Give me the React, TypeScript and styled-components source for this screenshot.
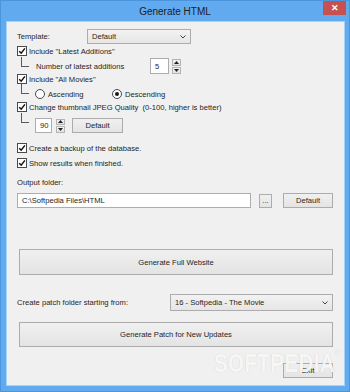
import React from "react";
import styled, { createGlobalStyle } from "styled-components";

const GlobalStyle = createGlobalStyle`
  html, body {
    margin: 0;
    padding: 0;
    background: #62aaef;
  }
  body {
    font-family: "Liberation Sans", Arial, sans-serif;
    color: #1e1e1e;
  }
`;

const Window = styled.div`
  width: 350px;
  height: 392px;
  box-sizing: border-box;
  background: #62aaef;
  border: 1px solid #4b95de;
  display: flex;
  flex-direction: column;
`;

const TitleBar = styled.div`
  height: 21px;
  display: grid;
  grid-template-columns: 1fr auto 1fr;
  align-items: start;
`;

const Title = styled.div`
  grid-column: 2;
  font-size: 10px;
  line-height: 21px;
  color: #202020;
`;

const CloseButton = styled.div`
  grid-column: 3;
  justify-self: end;
  width: 23px;
  height: 14px;
  margin-right: 3px;
  background: #c75050;
  color: #fff;
  font-size: 9px;
  font-weight: bold;
  display: flex;
  align-items: center;
  justify-content: center;
`;

const Client = styled.div`
  flex: 1;
  margin: 0 5px 6px 6px;
  padding: 0 11px 0 10px;
  background: #f0f0f0;
  box-shadow: 0 0 0 1px #a9d2f7;
  display: flex;
  flex-direction: column;
  position: relative;
  overflow: hidden;
`;

const Row = styled.div<{ $mt: number; $h: number; $ml?: number }>`
  display: flex;
  align-items: center;
  height: ${(p) => p.$h}px;
  margin-top: ${(p) => p.$mt}px;
  margin-left: ${(p) => p.$ml ?? 0}px;
  font-size: 7.6px;
  white-space: nowrap;
`;

const Label = styled.span<{ $w?: number; $ml?: number }>`
  display: inline-block;
  width: ${(p) => (p.$w ? `${p.$w}px` : "auto")};
  margin-left: ${(p) => p.$ml ?? 0}px;
  font-size: 7.6px;
  color: #1e1e1e;
`;

const Box = styled.span`
  width: 8px;
  height: 8px;
  border: 1px solid #4a4a4a;
  background: #fff;
  display: inline-flex;
  align-items: center;
  justify-content: center;
  margin-right: 2px;
`;

const RadioCircle = styled.span<{ $on?: boolean }>`
  width: 8px;
  height: 8px;
  border: 1px solid #4a4a4a;
  border-radius: 50%;
  background: #fff;
  display: inline-flex;
  align-items: center;
  justify-content: center;
  margin-right: 3px;
  &::after {
    content: "";
    width: 4px;
    height: 4px;
    border-radius: 50%;
    background: ${(p) => (p.$on ? "#1a1a1a" : "transparent")};
  }
`;

const RadioItem = styled.span<{ $w: number; $ml: number }>`
  display: inline-flex;
  align-items: center;
  width: ${(p) => p.$w}px;
  margin-left: ${(p) => p.$ml}px;
`;

const TreeLine = styled.span<{ $top: number; $h: number }>`
  align-self: flex-start;
  margin-top: ${(p) => p.$top}px;
  margin-left: 4px;
  width: 7px;
  height: ${(p) => p.$h}px;
  border-left: 1px solid #5a5a5a;
  border-bottom: 1px solid #5a5a5a;
  flex-shrink: 0;
`;

const Field = styled.div<{ $w: number; $h: number; $ml?: number }>`
  box-sizing: border-box;
  width: ${(p) => p.$w}px;
  height: ${(p) => p.$h}px;
  margin-left: ${(p) => p.$ml ?? 0}px;
  border: 1px solid #adadad;
  background: #fff;
  font-size: 7.6px;
  padding-left: 4px;
  display: flex;
  align-items: center;
  color: #1e1e1e;
`;

const Spinner = styled.div<{ $ml: number; $h: number }>`
  display: flex;
  flex-direction: column;
  gap: 1px;
  width: 9px;
  height: ${(p) => p.$h}px;
  margin-left: ${(p) => p.$ml}px;
`;

const SpinHalf = styled.div`
  flex: 1;
  border: 1px solid #b4b4b4;
  background: linear-gradient(#f2f2f2, #e2e2e2);
  display: flex;
  align-items: center;
  justify-content: center;
`;

const Button = styled.div<{ $w: number; $h: number; $ml?: number }>`
  box-sizing: border-box;
  width: ${(p) => p.$w}px;
  height: ${(p) => p.$h}px;
  margin-left: ${(p) => p.$ml ?? 0}px;
  border: 1px solid #acacac;
  background: linear-gradient(#f0f0f0, #e4e4e4);
  font-size: 7.6px;
  color: #1e1e1e;
  display: flex;
  align-items: center;
  justify-content: center;
`;

const WideButton = styled(Button)`
  margin-left: 2px;
`;

const ExitRow = styled.div`
  display: flex;
  justify-content: flex-end;
  margin-top: 16px;
`;

const Select = styled.div<{ $w: number; $h: number }>`
  box-sizing: border-box;
  width: ${(p) => p.$w}px;
  height: ${(p) => p.$h}px;
  border: 1px solid #acacac;
  background: linear-gradient(#f2f2f2, #e6e6e6);
  font-size: 7.6px;
  color: #1e1e1e;
  display: flex;
  align-items: center;
  justify-content: space-between;
  padding: 0 4px 0 4px;
`;

const Watermark = styled.div`
  position: absolute;
  left: 207px;
  top: 327px;
  font-size: 25px;
  font-weight: bold;
  color: rgba(255, 255, 255, 0.85);
  text-shadow: 0 0 1px rgba(120, 120, 120, 0.35);
  transform: scaleX(0.82);
  transform-origin: left top;
  pointer-events: none;
  letter-spacing: 0.5px;
  sup {
    font-size: 7px;
    vertical-align: top;
  }
`;

const Check = () => (
  <Box>
    <svg width="8" height="8" viewBox="0 0 8 8">
      <path d="M1.2 4.2 L3.2 6.2 L6.9 1.4" fill="none" stroke="#111" strokeWidth="1.5" />
    </svg>
  </Box>
);

const Chevron = () => (
  <svg width="6" height="4" viewBox="0 0 6 4">
    <path d="M0.5 0.5 L3 3 L5.5 0.5" fill="none" stroke="#444" strokeWidth="1" />
  </svg>
);

const SpinButtons = ({ ml, h }: { ml: number; h: number }) => (
  <Spinner $ml={ml} $h={h}>
    <SpinHalf>
      <svg width="5" height="3" viewBox="0 0 5 3">
        <path d="M0 3 L2.5 0 L5 3 Z" fill="#222" />
      </svg>
    </SpinHalf>
    <SpinHalf>
      <svg width="5" height="3" viewBox="0 0 5 3">
        <path d="M0 0 L2.5 3 L5 0 Z" fill="#222" />
      </svg>
    </SpinHalf>
  </Spinner>
);

export default function App() {
  return (
    <>
      <GlobalStyle />
      <Window>
        <TitleBar>
          <Title>Generate HTML</Title>
          <CloseButton>✕</CloseButton>
        </TitleBar>
        <Client>
          <Row $mt={7} $h={15}>
            <Label $w={70}>Template:</Label>
            <Select $w={104} $h={15}>
              <span>Default</span>
              <Chevron />
            </Select>
          </Row>

          <Row $mt={2} $h={10}>
            <Check />
            <Label>Include "Latest Additions"</Label>
          </Row>

          <Row $mt={2} $h={16}>
            <TreeLine $top={-1} $h={9} />
            <Label $w={114} $ml={7}>Number of latest additions</Label>
            <Field $w={19} $h={16}>5</Field>
            <SpinButtons ml={3} h={15} />
          </Row>

          <Row $mt={0} $h={10}>
            <Check />
            <Label>Include "All Movies"</Label>
          </Row>

          <Row $mt={5} $h={10}>
            <TreeLine $top={-5} $h={9} />
            <RadioItem $w={77} $ml={6}>
              <RadioCircle />
              <Label>Ascending</Label>
            </RadioItem>
            <RadioItem $w={80} $ml={0}>
              <RadioCircle $on />
              <Label>Descending</Label>
            </RadioItem>
          </Row>

          <Row $mt={3} $h={10}>
            <Check />
            <Label>Change thumbnail JPEG Quality&nbsp; (0-100, higher is better)</Label>
          </Row>

          <Row $mt={6} $h={15}>
            <TreeLine $top={-5} $h={9} />
            <Field $w={17} $h={15} $ml={6}>90</Field>
            <SpinButtons ml={4} h={14} />
            <Button $w={51} $h={15} $ml={7}>Default</Button>
          </Row>

          <Row $mt={10} $h={10}>
            <Check />
            <Label>Create a backup of the database.</Label>
          </Row>

          <Row $mt={5} $h={10}>
            <Check />
            <Label>Show results when finished.</Label>
          </Row>

          <Row $mt={9} $h={10}>
            <Label>Output folder:</Label>
          </Row>

          <Row $mt={6} $h={15}>
            <Field $w={234} $h={15}>C:\Softpedia Files\HTML</Field>
            <Button $w={13} $h={14} $ml={8}>...</Button>
            <Button $w={50} $h={15} $ml={11}>Default</Button>
          </Row>

          <Row $mt={41} $h={26}>
            <WideButton $w={314} $h={26}>Generate Full Website</WideButton>
          </Row>

          <Row $mt={19} $h={17}>
            <Label $w={153}>Create patch folder starting from:</Label>
            <Select $w={163} $h={17}>
              <span>16 - Softpedia - The Movie</span>
              <Chevron />
            </Select>
          </Row>

          <Row $mt={11} $h={25}>
            <WideButton $w={314} $h={25}>Generate Patch for New Updates</WideButton>
          </Row>

          <ExitRow>
            <Button $w={50} $h={15}>Exit</Button>
          </ExitRow>

          <Watermark>
            SOFTPEDIA<sup>®</sup>
          </Watermark>
        </Client>
      </Window>
    </>
  );
}
